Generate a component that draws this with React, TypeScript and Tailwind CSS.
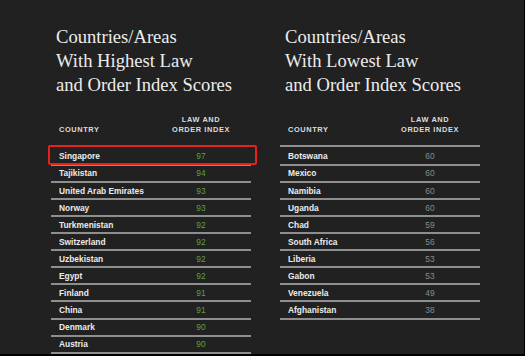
import React from 'react';

const highest: [string, number][] = [
  ['Singapore', 97],
  ['Tajikistan', 94],
  ['United Arab Emirates', 93],
  ['Norway', 93],
  ['Turkmenistan', 92],
  ['Switzerland', 92],
  ['Uzbekistan', 92],
  ['Egypt', 92],
  ['Finland', 91],
  ['China', 91],
  ['Denmark', 90],
  ['Austria', 90],
];

const lowest: [string, number][] = [
  ['Botswana', 60],
  ['Mexico', 60],
  ['Namibia', 60],
  ['Uganda', 60],
  ['Chad', 59],
  ['South Africa', 56],
  ['Liberia', 53],
  ['Gabon', 53],
  ['Venezuela', 49],
  ['Afghanistan', 38],
];

function ScoreTable({ title, rows, good }: { title: string[]; rows: [string, number][]; good?: boolean }) {
  return (
    <div className="w-[200px]">
      <h2 className="pl-[5px] font-['Liberation_Serif',serif] text-[18.6px] leading-[24px] text-[#ececec]">
        {title.map((t) => (
          <div key={t}>{t}</div>
        ))}
      </h2>
      <div className="mt-[18px] flex items-end border-b-2 border-[#8e8e8e] pb-[9px] font-['Liberation_Sans',Arial,sans-serif] text-[7.4px] font-bold leading-[10.5px] tracking-[0.6px] text-[#dcdcdc]">
        <div className="w-[115px] pl-[8px]">COUNTRY</div>
        <div className="w-[70px] text-center">
          LAW AND
          <br />
          ORDER INDEX
        </div>
      </div>
      <div className="pt-[2px] font-['Liberation_Sans',Arial,sans-serif] text-[8.4px]">
        {rows.map(([name, score], i) => (
          <div key={name} className="relative flex h-[17.1px] items-center border-b-2 border-[#8e8e8e] pt-[1px]">
            <div className="w-[115px] pl-[8px] font-bold text-[#ebebeb]">{name}</div>
            <div className={`w-[70px] text-center ${good ? 'text-[#5f9e3e]' : 'text-[#8a8a8a]'}`}>{score}</div>
            {good && i === 0 && (
              <div className="absolute -top-[3.5px] -bottom-[1px] -left-[3px] -right-[6px] rounded-[2px] border-2 border-[#e8201c]" />
            )}
          </div>
        ))}
      </div>
    </div>
  );
}

export default function App() {
  return (
    <div className="w-[525px] h-[356px] overflow-hidden bg-black">
      <div className="flex h-[354px] w-[524px] gap-[29px] bg-[#212121] pl-[51px] pt-[24.6px]">
        <ScoreTable title={['Countries/Areas', 'With Highest Law', 'and Order Index Scores']} rows={highest} good />
        <ScoreTable title={['Countries/Areas', 'With Lowest Law', 'and Order Index Scores']} rows={lowest} />
      </div>
    </div>
  );
}
